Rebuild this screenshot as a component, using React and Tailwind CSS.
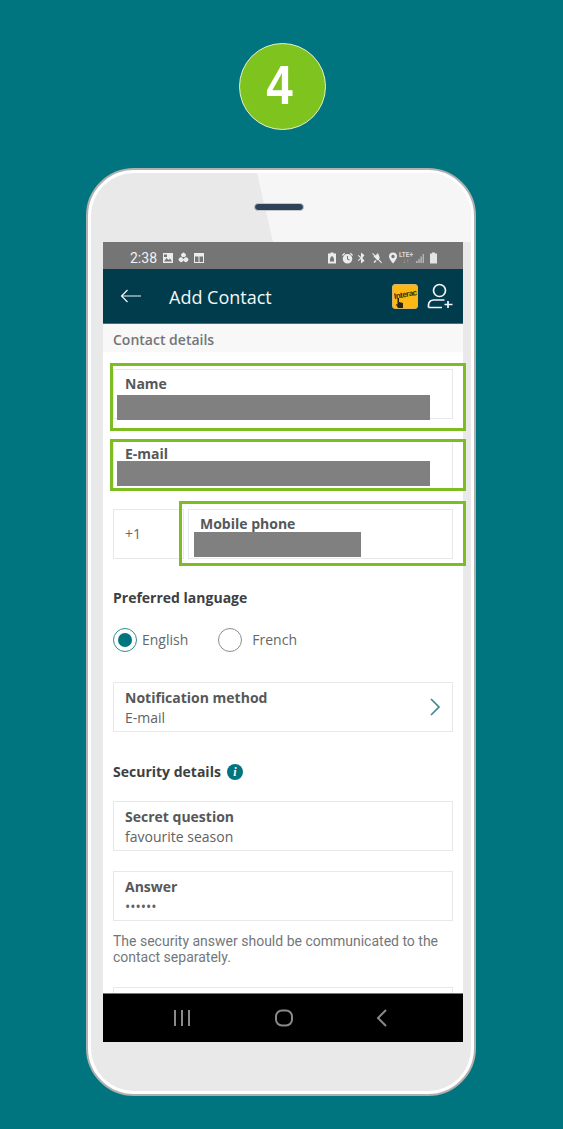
import React from 'react';

const sans = "font-['Open_Sans','Noto_Sans',sans-serif]";

const Field = ({ label, value, tight, className = '' }) => (
  <div className={`border border-[#e6e8ea] bg-white pl-[11px] flex flex-col ${className}`}>
    <div className={`text-[14px] leading-[19px] font-bold text-[#55585a] ${tight ? 'mt-[4px]' : 'mt-[5px]'}`}>{label}</div>
    {value && <div className="text-[14px] leading-[19px] text-[#5f6264] mt-px">{value}</div>}
  </div>
);

const StatusIcon = ({ w = 12, className = '', children }) => (
  <svg width={w} height="12" viewBox={`0 0 ${w} 12`} className={`text-[#ececec] shrink-0 ${className}`} fill="currentColor">
    {children}
  </svg>
);

const StatusBar = () => (
  <div className="h-[27px] bg-[#757575] flex items-center pl-[27px] pr-[26px] pt-[5px] shrink-0">
    <span className="font-['Roboto',sans-serif] text-[14px] leading-none text-[#f2f2f2] mr-[6px]">2:38</span>
    <div className="flex items-center gap-[5px]">
      <StatusIcon w={10}>
        <path fillRule="evenodd" d="M0 1h10v10H0zM1 9.500l2.500-3.500 2 2 1.500-1.500L9 9.500zM1 2.500V5h3V2.500z" />
      </StatusIcon>
      <StatusIcon w={11}>
        <path d="M5.500 5a2 2 0 0 1-1.200-3.800 1.600 1.600 0 0 1 2.400 0A2 2 0 0 1 5.500 5zM5 6.500a2.200 2.200 0 0 1-3.500 2.700A1.800 1.800 0 0 1 1 6.600 2.200 2.200 0 0 1 5 6.500zM6 6.500a2.200 2.200 0 0 1 4 .1 1.800 1.800 0 0 1-.5 2.600A2.200 2.200 0 0 1 6 6.500z" />
      </StatusIcon>
      <StatusIcon w={10}>
        <path fillRule="evenodd" d="M0 1h10v10H0zM1 4.500v5.500h3.500V4.500zM5.500 4.500v5.500H9V4.500z" />
      </StatusIcon>
    </div>
    <div className="flex items-center ml-auto">
      <StatusIcon w={8}>
        <path fillRule="evenodd" d="M2.500.5h3v1H8v10H0v-10h2.500zM4 4.200a1.500 1.500 0 0 0-1.500 1.500v.8H2V9.500h4V6.500h-.5v-.8A1.500 1.500 0 0 0 4 4.200z" />
      </StatusIcon>
      <StatusIcon w={11} className="ml-[6px]">
        <path fillRule="evenodd" d="M5.500 2a4.800 4.800 0 1 1 0 9.600 4.800 4.800 0 0 1 0-9.600zM5 4v3.200l2.400 1.400.5-.8L6 6.700V4z" />
        <path d="M0 3l2.200-2.200.9.900L.9 3.900zM11 3L8.800.8l-.9.900 2.200 2.200z" />
      </StatusIcon>
      <StatusIcon w={9} className="ml-[4px]">
        <path d="M4 .5l3.500 2.800L5.300 6l2.200 2.700L4 11.500V7L1.500 9 .8 8.200 3.500 6 .8 3.800 1.500 3 4 5z" />
      </StatusIcon>
      <StatusIcon w={10} className="ml-[6px]">
        <path d="M6 1L7.800 6 5.500 8.500 1.500 4.200 4 3zM1.500 10l2-2 1 1-2 2zM1 1l9 9.500-.8.800L.2 1.800z" />
      </StatusIcon>
      <StatusIcon w={8} className="ml-[7px]">
        <path fillRule="evenodd" d="M4 .5a4 4 0 0 1 4 4c0 2.500-4 7-4 7s-4-4.500-4-7a4 4 0 0 1 4-4zm0 2.300a1.700 1.700 0 1 0 0 3.400 1.700 1.700 0 0 0 0-3.400z" />
      </StatusIcon>
      <div className="flex flex-col items-center w-[12px] ml-[3px] leading-none text-[#d8d8d8] font-['Roboto',sans-serif] font-bold">
        <span className="text-[6.500px] leading-[6px]">LTE+</span>
        <span className="text-[6.500px] leading-[6px] text-[#a8a8a8]">↓↑</span>
      </div>
      <StatusIcon w={8} className="ml-[4px]">
        <path d="M0 11h1.500V9H0zM2.200 11h1.500V7H2.200zM4.400 11h1.500V4.500H4.400zM6.600 11H8V2H6.600z" fill="#b5b5b5" />
      </StatusIcon>
      <StatusIcon w={7} className="ml-[6px]">
        <path d="M2 .5h3v1h2v10H0v-10h2z" fill="#e4e4e4" />
      </StatusIcon>
    </div>
  </div>
);

const AppBar = () => (
  <div className="h-[55px] bg-[#003c4c] border-b border-[#3f7480] flex items-center shrink-0 relative">
    <svg width="22" height="14" viewBox="0 0 22 14" fill="none" stroke="#f2f6f7" strokeWidth="1.200" className="ml-[17px]">
      <path d="M21 7H1.500M7.500 1L1.500 7l6 6" />
    </svg>
    <span className={`${sans} ml-[27px] text-[18px] text-[#f4f7f8] leading-none pt-[2px]`}>Add Contact</span>
    <div className="ml-auto mr-[10px] flex items-center gap-[9px]">
      <div className="relative w-[26px] h-[25px] rounded-[3px] bg-[#fdb913] border border-[#d6b46a]">
        <span className="absolute left-[1px] top-[6px] font-['Liberation_Sans',sans-serif] font-bold text-[8px] leading-none tracking-[-0.5px] text-[#3a2c05] -rotate-[10deg] whitespace-nowrap">Interac</span>
        <svg width="7" height="10" viewBox="0 0 7 10" className="absolute left-[3px] bottom-0" fill="#2a2416">
          <path d="M1.500 0H3v4l4 1v5H2L0 6.500l.8-.5 .7 .8z" />
        </svg>
      </div>
      <svg width="26" height="26" viewBox="0 0 26 26" fill="none" stroke="#f4f7f8" strokeWidth="1.700">
        <circle cx="12.500" cy="7.500" r="6" />
        <path d="M1.500 24.500v-2.500a5 5 0 0 1 5-5h11" />
        <path d="M1.500 24.500H15M21 18v7M17.500 21.500h8" />
      </svg>
    </div>
  </div>
);

const Radio = ({ on, label, className = '' }) => (
  <div className={`flex items-center ${on ? 'gap-[5px]' : 'gap-[10px]'} ${className}`}>
    <span className={`w-[24px] h-[24px] rounded-full flex items-center justify-center border-[1.500px] ${on ? 'border-[#2f8c93]' : 'border-[#8e8e8e]'}`}>
      {on && <span className="w-[14px] h-[14px] rounded-full bg-[#00757f]" />}
    </span>
    <span className="text-[14px] text-[#64676a] leading-none">{label}</span>
  </div>
);

const ScreenBody = () => (
  <div className={`${sans} flex-1 min-h-0 bg-white relative`}>
    <div className="h-full overflow-hidden">
      <div className="h-[28px] bg-[#f8f8f8] pl-[10px] pt-[7px] text-[14px] leading-[17px] font-semibold text-[#737577]">Contact details</div>
      <div className="px-[10px] pt-[17px]">
        <Field tight label="Name" className="h-[50px]" />
        <Field tight label="E-mail" className="h-[50px] mt-[20px]" />
        <div className="flex gap-[4px] mt-[20px]">
          <div className="w-[71px] h-[50px] border border-[#e6e8ea] pl-[11px] pb-[2px] flex items-center text-[14px] text-[#64676a]">+1</div>
          <Field tight label="Mobile phone" className="flex-1 h-[50px]" />
        </div>
        <div className="mt-[29px] text-[14px] leading-[19px] font-bold text-[#3d4042]">Preferred language</div>
        <div className="flex items-center mt-[21px]">
          <Radio on label="English" />
          <Radio label="French" className="ml-[30px]" />
        </div>
        <div className="mt-[30px] h-[50px] border border-[#e6e8ea] pl-[11px] relative">
          <div className="text-[14px] leading-[19px] font-bold text-[#55585a] mt-[5px]">Notification method</div>
          <div className="text-[14px] leading-[19px] text-[#5f6264] mt-px">E-mail</div>
          <svg width="12" height="18" viewBox="0 0 12 18" fill="none" stroke="#3f8a92" strokeWidth="1.700" className="absolute right-[11px] top-[15px]">
            <path d="M2 1l8 8-8 8" />
          </svg>
        </div>
        <div className="mt-[30px] flex items-center gap-[6px]">
          <span className="text-[14px] leading-[19px] font-bold text-[#3d4042]">Security details</span>
          <span className="w-[16px] h-[16px] rounded-full bg-[#00757f] text-white flex items-center justify-center font-['Liberation_Serif',serif] italic font-bold text-[12px] leading-none">i</span>
        </div>
        <Field label="Secret question" value="favourite season" className="h-[50px] mt-[20px]" />
        <Field label="Answer" value="••••••" className="h-[50px] mt-[20px]" />
        <p className="mt-[12px] text-[14px] leading-[16px] text-[#74777a] font-['Roboto','Open_Sans',sans-serif] pr-[10px]">
          The security answer should be communicated to the contact separately.
        </p>
        <div className="mt-[22px] h-[50px] border border-[#e6e8ea]" />
      </div>
    </div>
    {/* redacted values */}
    <div className="absolute left-[14px] top-[71px] w-[313px] h-[25px] bg-[#808080]" />
    <div className="absolute left-[14px] top-[137px] w-[313px] h-[25px] bg-[#808080]" />
    <div className="absolute left-[91px] top-[208px] w-[167px] h-[25px] bg-[#808080]" />
    {/* green highlight boxes */}
    <div className="absolute left-[7px] top-[39px] w-[356px] h-[68px] border-[3px] border-[#7ebd22]" />
    <div className="absolute left-[7px] top-[115px] w-[356px] h-[52px] border-[3px] border-[#7ebd22]" />
    <div className="absolute left-[76px] top-[177px] w-[287px] h-[65px] border-[3px] border-[#7ebd22]" />
  </div>
);

const NavBar = () => (
  <div className="h-[49px] bg-black border-t border-[#777] flex items-center justify-between pl-[70px] pr-[75px] shrink-0">
    <svg width="18" height="18" viewBox="0 0 18 18" stroke="#8a8a8a" strokeWidth="2">
      <path d="M2 1v16M9 1v16M16 1v16" />
    </svg>
    <svg width="18" height="18" viewBox="0 0 18 18" fill="none" stroke="#8a8a8a" strokeWidth="2">
      <rect x="1" y="1.500" width="16" height="15" rx="6" />
    </svg>
    <svg width="12" height="18" viewBox="0 0 12 18" fill="none" stroke="#8a8a8a" strokeWidth="2">
      <path d="M10 1L2 9l8 8" />
    </svg>
  </div>
);

const App = () => (
  <div className="w-[563px] h-[1129px] bg-[#00757f] flex flex-col overflow-hidden">
    <div className="mt-[43px] ml-[239px] w-[87px] h-[87px] rounded-full bg-[#7fc31f] border border-[#e4f0cf] flex items-center justify-center shrink-0">
      <span className="font-['Liberation_Sans',sans-serif] font-bold text-[56px] leading-none text-white scale-x-[0.85] mr-[5px] mb-[4px]">4</span>
    </div>
    <div className="mt-[38px] ml-[86px] w-[390px] h-[928px] rounded-[48px] bg-white border-2 border-[#b0b0b0] p-[3px] shrink-0">
      <div className="relative w-full h-full rounded-[43px] bg-[#e9e9e9] overflow-hidden flex flex-col pl-[12px] pt-[69px]">
        {/* sheen on the upper glass */}
        <svg className="absolute left-0 top-0" width="380" height="69" viewBox="0 0 380 69">
          <path d="M166 0H380V69H182z" fill="#f6f6f6" />
        </svg>
        <div className="absolute left-[163px] top-[30px] w-[50px] h-[8px] rounded-full bg-[#2f4358] border border-[#c5c9cd]" />
        <div className="relative w-[360px] h-[800px] flex flex-col">
          <StatusBar />
          <AppBar />
          <ScreenBody />
          <NavBar />
        </div>
      </div>
    </div>
  </div>
);

export default App;
